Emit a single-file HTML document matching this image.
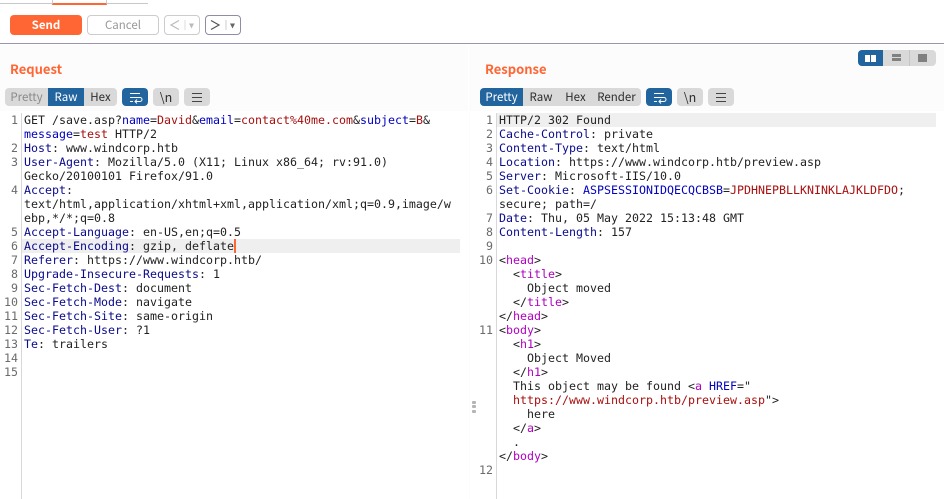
<!DOCTYPE html>
<html><head><meta charset="utf-8"><style>
html,body{margin:0;padding:0}
body{width:944px;height:499px;overflow:hidden;background:#fff;position:relative;font-family:"Noto Sans CJK JP","Liberation Sans",sans-serif}
.a{position:absolute;box-sizing:border-box}
.b{position:absolute;box-sizing:border-box;text-align:center;font-size:11.5px;line-height:18px;height:18px;color:#2d2d2d}
.code{position:absolute;font:11.63px/14px "DejaVu Sans Mono",monospace;color:#222;white-space:pre;letter-spacing:0}
.n{position:absolute;font:11.63px/14px "DejaVu Sans Mono",monospace;color:#6b6b6b;text-align:right;width:14px;white-space:pre}
i{font-style:normal}
.k{color:#0a0a8c}.p{color:#0000c0}.v{color:#a80f0f}.t{color:#b000c0}
</style></head><body>
<div class="a" style="left:0;top:0;width:944px;height:44px;background:#fff;border-bottom:1px solid #9a95ad"></div>
<div class="a" style="left:0;top:3px;width:148px;height:1px;background:#c8c8c8"></div>
<div class="a" style="left:52px;top:0;width:55px;height:5px;border:1px solid #ccc;border-top:0;border-bottom:2px solid #ff6633"></div>

<div class="a" style="left:10px;top:15px;width:72px;height:20px;background:#ff6633;border-radius:4px;color:#fff;font-weight:bold;font-size:11.5px;line-height:20px;text-align:center">Send</div>
<div class="a" style="left:87px;top:15px;width:72px;height:20px;border:1px solid #ccc;border-radius:4px;color:#999;font-size:11.5px;line-height:18px;text-align:center">Cancel</div>
<div class="a" style="left:164px;top:15px;width:36px;height:20px;border:1px solid #ccc;border-radius:4px"></div>
<div class="a" style="left:205px;top:15px;width:36px;height:20px;border:1px solid #8f8ca8;border-radius:4px"></div>
<svg class="a" style="left:164px;top:15px" width="80" height="20">
<path d="M15 5.5 L7 10 L15 14.5" fill="none" stroke="#bbb" stroke-width="1.2"/>
<path d="M21 5V15" stroke="#ddd"/><path d="M25 8.5h5l-2.5 5z" fill="#bbb"/>
<path d="M47 5.5 L55 10 L47 14.5" fill="none" stroke="#555" stroke-width="1.2"/>
<path d="M62 5V15" stroke="#ccc"/><path d="M66 8.5h5l-2.5 5z" fill="#666"/>
</svg>

<div class="a" style="left:0;top:45px;width:944px;height:454px;background:#fcfcfc"></div>
<div class="a" style="left:468px;top:45px;width:1px;height:454px;background:#fff"></div>

<div class="a" style="left:858px;top:50px;width:78px;height:16px;background:#d9d9d9;border-radius:4px"></div>
<div class="a" style="left:858px;top:50px;width:25px;height:16px;background:#22649e;border-radius:4px 0 0 4px"></div>
<div class="a" style="left:909px;top:50px;width:1px;height:16px;background:#c6c6c6"></div>
<div class="a" style="left:865px;top:55px;width:5px;height:7px;background:#fff"></div>
<div class="a" style="left:871px;top:55px;width:5px;height:7px;background:#fff"></div>
<div class="a" style="left:892px;top:54px;width:9px;height:3px;background:#808080"></div>
<div class="a" style="left:892px;top:58px;width:9px;height:3px;background:#808080"></div>
<div class="a" style="left:918px;top:54px;width:9px;height:8px;background:#808080"></div>

<div class="a" style="left:10px;top:61px;font-size:13px;font-weight:bold;color:#ff6633;line-height:16px">Request</div>
<div class="a" style="left:485px;top:61px;font-size:13px;font-weight:bold;color:#ff6633;line-height:16px">Response</div>

<div class="a" style="left:5px;top:88px;width:112px;height:18px;background:#d9d9d9;border-radius:4px"></div>
<div class="b" style="left:5px;top:88px;width:43px;color:#8a8a8a">Pretty</div>
<div class="b" style="left:48px;top:88px;width:36px;background:#22649e;color:#fff">Raw</div>
<div class="b" style="left:84px;top:88px;width:33px">Hex</div>

<div class="a" style="left:480px;top:88px;width:161px;height:18px;background:#d9d9d9;border-radius:4px"></div>
<div class="b" style="left:480px;top:88px;width:43px;background:#22649e;color:#fff;border-radius:4px 0 0 4px">Pretty</div>
<div class="b" style="left:523px;top:88px;width:36px">Raw</div>
<div class="b" style="left:559px;top:88px;width:33px">Hex</div>
<div class="b" style="left:592px;top:88px;width:49px">Render</div>

<div class="a" style="left:122px;top:88px;width:26px;height:18px;background:#22649e;border-radius:4px"></div>
<div class="b" style="left:153px;top:88px;width:26px;background:#d9d9d9;border-radius:4px;font-size:12.5px">\n</div>
<div class="a" style="left:184px;top:88px;width:26px;height:18px;background:#d9d9d9;border-radius:4px"></div>
<div class="a" style="left:646px;top:88px;width:26px;height:18px;background:#22649e;border-radius:4px"></div>
<div class="b" style="left:677px;top:88px;width:26px;background:#d9d9d9;border-radius:4px;font-size:12.5px">\n</div>
<div class="a" style="left:708px;top:88px;width:26px;height:18px;background:#d9d9d9;border-radius:4px"></div>
<svg class="a" style="left:0;top:88px" width="944" height="18">
<g fill="none" stroke="#fff"><path d="M130 5.5H140M130 9.5H140a2 2 0 0 1 0 4H135M130 13.5H133"/><path d="M137 11.5l-2 2 2 2"/>
<path d="M654 5.5H664M654 9.5H664a2 2 0 0 1 0 4H659M654 13.5H657"/><path d="M661 11.5l-2 2 2 2"/></g>
<g stroke="#444"><path d="M192 5.5H202M192 9.5H202M192 13.5H202M716 5.5H726M716 9.5H726M716 13.5H726"/></g>
</svg>

<div class="a" style="left:0;top:111px;width:468px;height:388px;background:#fff"></div>
<div class="a" style="left:470px;top:111px;width:474px;height:388px;background:#fff"></div>
<div class="a" style="left:21px;top:113px;width:1px;height:386px;background:#d8d8d8"></div>
<div class="a" style="left:496px;top:113px;width:1px;height:386px;background:#d8d8d8"></div>
<div class="a" style="left:22px;top:239px;width:438px;height:14px;background:#efefef"></div>
<div class="a" style="left:497px;top:113px;width:439px;height:14px;background:#efefef"></div>
<div class="a" style="left:234px;top:239px;width:2px;height:14px;background:#ff6633"></div>

<div class="a" style="left:472px;top:401px;width:4px;height:3px;background:#b5b5b5;border-radius:1px"></div>
<div class="a" style="left:472px;top:405px;width:4px;height:3px;background:#b5b5b5;border-radius:1px"></div>
<div class="a" style="left:472px;top:410px;width:4px;height:3px;background:#b5b5b5;border-radius:1px"></div>

<div class="n" style="left:4px;top:113px"> 1

 2
 3

 4


 5
 6
 7
 8
 9
10
11
12
13
14
15</div>
<div class="code" style="left:24px;top:113px">GET /save.asp?<i class="p">name</i>=<i class="v">David</i>&amp;<i class="p">email</i>=<i class="v">contact%40me.com</i>&amp;<i class="p">subject</i>=<i class="v">B</i>&amp;
<i class="p">message</i>=<i class="v">test</i> HTTP/2
<i class="k">Host</i>: www.windcorp.htb
<i class="k">User-Agent</i>: Mozilla/5.0 (X11; Linux x86_64; rv:91.0)
Gecko/20100101 Firefox/91.0
<i class="k">Accept</i>:
text/html,application/xhtml+xml,application/xml;q=0.9,image/w
ebp,*/*;q=0.8
<i class="k">Accept-Language</i>: en-US,en;q=0.5
<i class="k">Accept-Encoding</i>: gzip, deflate
<i class="k">Referer</i>: https://www.windcorp.htb/
<i class="k">Upgrade-Insecure-Requests</i>: 1
<i class="k">Sec-Fetch-Dest</i>: document
<i class="k">Sec-Fetch-Mode</i>: navigate
<i class="k">Sec-Fetch-Site</i>: same-origin
<i class="k">Sec-Fetch-User</i>: ?1
<i class="k">Te</i>: trailers</div>

<div class="n" style="left:479px;top:113px"> 1
 2
 3
 4
 5
 6

 7
 8
 9
10




11









12</div>
<div class="code" style="left:499px;top:113px">HTTP/2 302 Found
<i class="k">Cache-Control</i>: private
<i class="k">Content-Type</i>: text/html
<i class="k">Location</i>: https://www.windcorp.htb/preview.asp
<i class="k">Server</i>: Microsoft-IIS/10.0
<i class="k">Set-Cookie</i>: <i class="p">ASPSESSIONIDQECQCBSB</i>=<i class="v">JPDHNEPBLLKNINKLAJKLDFDO</i>;
secure; path=/
<i class="k">Date</i>: Thu, 05 May 2022 15:13:48 GMT
<i class="k">Content-Length</i>: 157

&lt;<i class="t">head</i>&gt;
  &lt;<i class="t">title</i>&gt;
    Object moved
  &lt;/<i class="t">title</i>&gt;
&lt;/<i class="t">head</i>&gt;
&lt;<i class="t">body</i>&gt;
  &lt;<i class="t">h1</i>&gt;
    Object Moved
  &lt;/<i class="t">h1</i>&gt;
  This object may be found &lt;<i class="t">a</i> <i class="p">HREF</i>="
  <i class="v">https://www.windcorp.htb/preview.asp</i>"&gt;
    here
  &lt;/<i class="t">a</i>&gt;
  .
&lt;/<i class="t">body</i>&gt;</div>
</body></html>
